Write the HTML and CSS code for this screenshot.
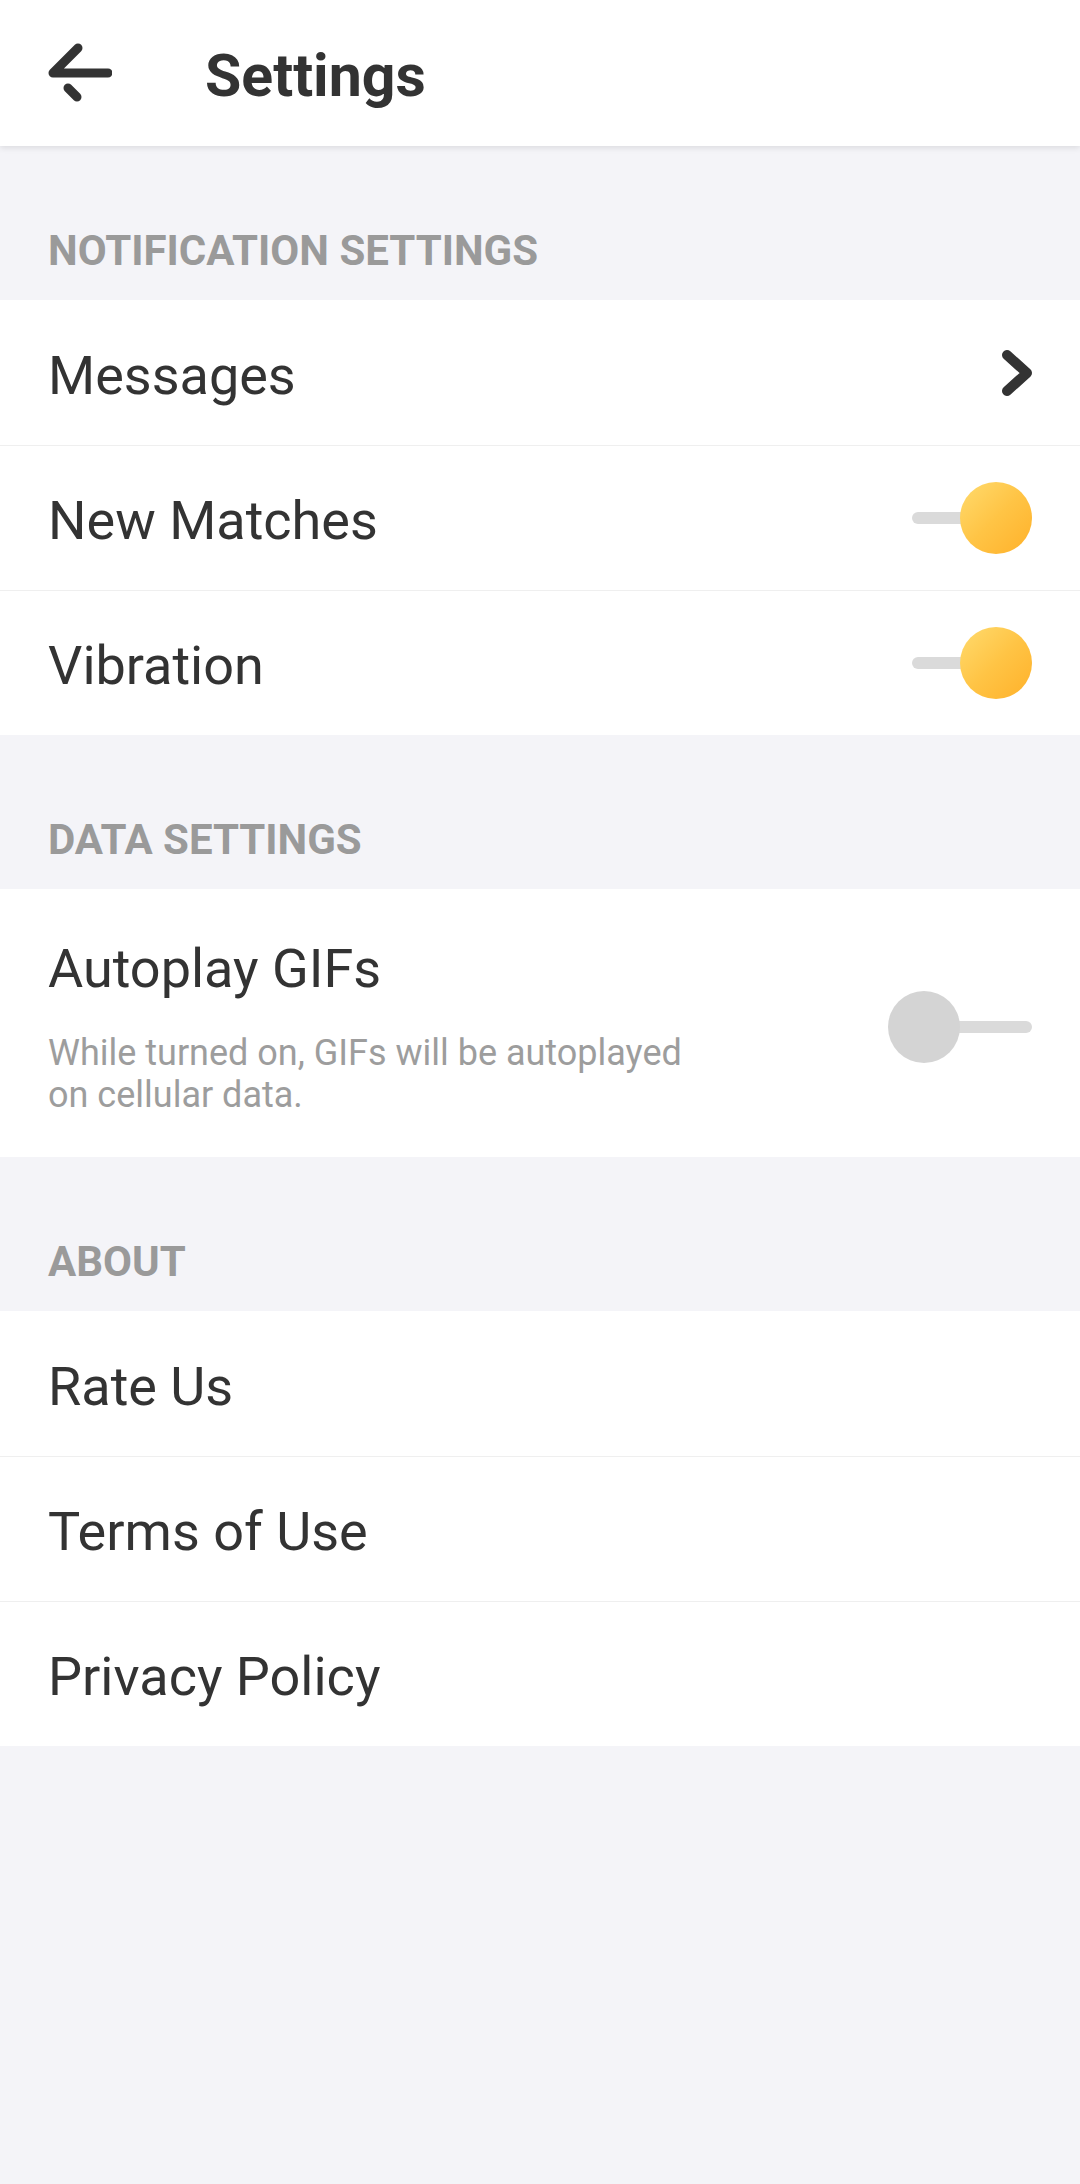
FILE: index.html
```html
<!DOCTYPE html>
<html lang="en">
<head>
    <meta charset="UTF-8">
    <meta name="viewport" content="width=device-width, initial-scale=1.0">
    <title>Settings</title>
    <link rel="stylesheet" href="styles.css">
</head>
<body>
    <header class="top-bar">
        <svg class="back-icon" width="64" height="64" viewBox="0 0 64 64">
            <path d="M30 7 L5 32 L60 32" fill="none" stroke="#333" stroke-width="9" stroke-linecap="round" stroke-linejoin="round"/>
            <path d="M20 47 L29 56" fill="none" stroke="#333" stroke-width="9" stroke-linecap="round"/>
        </svg>
        <h1 class="title">Settings</h1>
    </header>

    <div class="section-title">NOTIFICATION SETTINGS</div>
    <div class="group">
        <div class="row">
            <span class="label">Messages</span>
            <svg class="chevron" width="36" height="52" viewBox="0 0 36 52">
                <path d="M8 8 L28 26 L8 44" fill="none" stroke="#333" stroke-width="10" stroke-linecap="round" stroke-linejoin="round"/>
            </svg>
        </div>
        <div class="row">
            <span class="label">New Matches</span>
            <div class="switch on"><span class="track"></span><span class="knob"></span></div>
        </div>
        <div class="row">
            <span class="label">Vibration</span>
            <div class="switch on"><span class="track"></span><span class="knob"></span></div>
        </div>
    </div>

    <div class="section-title">DATA SETTINGS</div>
    <div class="group">
        <div class="row tall">
            <div class="text-block">
                <div class="label">Autoplay GIFs</div>
                <div class="hint">While turned on, GIFs will be autoplayed on cellular data.</div>
            </div>
            <div class="switch"><span class="track"></span><span class="knob"></span></div>
        </div>
    </div>

    <div class="section-title">ABOUT</div>
    <div class="group">
        <div class="row"><span class="label">Rate Us</span></div>
        <div class="row"><span class="label">Terms of Use</span></div>
        <div class="row"><span class="label">Privacy Policy</span></div>
    </div>
</body>
</html>
```

FILE: styles.css
```css
body {
    margin: 0;
    background: #f4f4f8;
    font-family: Roboto, "Noto Sans", sans-serif;
    color: #333;
}
.top-bar {
    height: 146px;
    background: white;
    display: flex;
    align-items: center;
    padding-left: 48px;
    box-shadow: 0 2px 6px rgba(0,0,0,0.1);
    position: relative;
}
.back-icon {
    flex-shrink: 0;
}
.title {
    margin: 0 0 0 93px;
    font-size: 59px;
    font-weight: 700;
    color: #333;
    padding-top: 4px;
}
.section-title {
    height: 154px;
    box-sizing: border-box;
    display: flex;
    align-items: flex-end;
    padding: 0 48px 25px;
    font-size: 42px;
    line-height: 48px;
    font-weight: 700;
    color: #9a9a9a;
}
.group {
    background: white;
}
.row {
    min-height: 145px;
    box-sizing: border-box;
    display: flex;
    align-items: center;
    justify-content: space-between;
    padding: 0 48px;
}
.row + .row {
    border-top: 1px solid #efefef;
}
.label {
    font-size: 54px;
    color: #333;
    padding-top: 5px;
}
.row.tall {
    min-height: 267px;
    padding-top: 48px;
    padding-bottom: 41px;
}
.text-block .label {
    padding-top: 0;
    line-height: 63px;
}
.hint {
    margin-top: 32px;
    max-width: 660px;
    font-size: 36px;
    line-height: 42px;
    color: #9d9d9d;
}
.chevron {
    margin-right: -3px;
}
.switch {
    position: relative;
    width: 144px;
    height: 72px;
    flex-shrink: 0;
}
.track {
    position: absolute;
    left: 24px;
    right: 0;
    top: 30px;
    height: 12px;
    border-radius: 6px;
    background: #dadada;
}
.knob {
    position: absolute;
    left: 0;
    top: 0;
    width: 72px;
    height: 72px;
    border-radius: 50%;
    background: #d4d4d4;
}
.switch.on .knob {
    left: auto;
    right: 0;
    background: linear-gradient(135deg, #ffdb6e 0%, #ffc445 50%, #ffb12a 100%);
}
```
